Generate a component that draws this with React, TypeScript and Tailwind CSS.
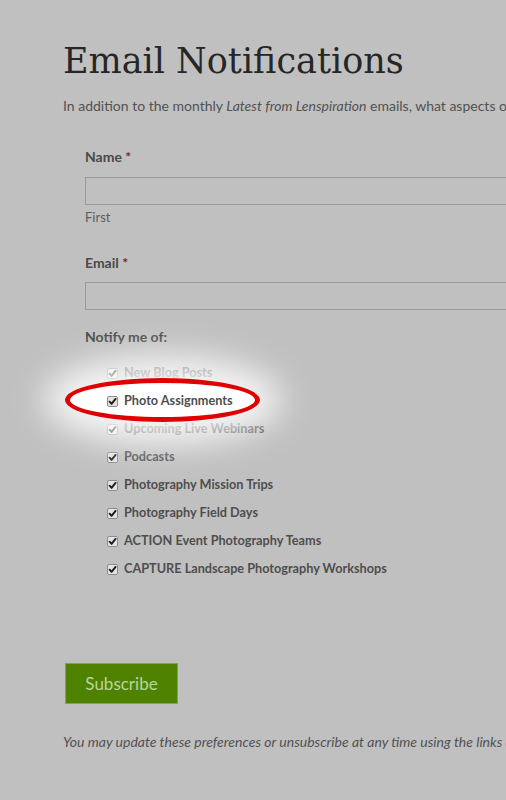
const options = [
  'New Blog Posts',
  'Photo Assignments',
  'Upcoming Live Webinars',
  'Podcasts',
  'Photography Mission Trips',
  'Photography Field Days',
  'ACTION Event Photography Teams',
  'CAPTURE Landscape Photography Workshops',
];

function Tick() {
  return (
    <span className="w-[11px] h-[11px] shrink-0 rounded-[2px] border border-[#8c8c8c] bg-[#e4e4e4] flex items-center justify-center">
      <svg width="9" height="9" viewBox="0 0 10 10">
        <path d="M1.8 5.2 L4 7.6 L8.4 2.2" stroke="#1e1e1e" strokeWidth="2.2" fill="none" strokeLinecap="round" strokeLinejoin="round" />
      </svg>
    </span>
  );
}

export default function App() {
  return (
    <div className="relative w-[506px] h-[800px] overflow-hidden bg-[#c0c0c0] pl-[63px] pt-[41px] font-['Lato','Liberation_Sans',sans-serif]">
      <h1 className="text-[35px] leading-[40px] text-[#262626] font-['DejaVu_Serif',serif] whitespace-nowrap">
        Email Notifications
      </h1>
      <p className="mt-[15px] text-[14px] leading-[20px] text-[#525252] whitespace-nowrap">
        In addition to the monthly <em>Latest from Lenspiration</em> emails, what aspects of Lenspiration would you like to hear about?
      </p>

      <div className="pl-[22px] pt-[31px]">
        <div className="text-[14px] leading-[20px] font-bold text-[#4a4a4a]">
          Name <span className="text-[#7a2a2a]">*</span>
        </div>
        <div className="mt-[10px] w-[440px] h-[28px] border border-[#9a9a9a]" />
        <div className="mt-[4px] text-[13px] leading-[16px] text-[#5e5e5e]">First</div>

        <div className="mt-[28px] text-[14px] leading-[20px] font-bold text-[#4a4a4a]">
          Email <span className="text-[#7a2a2a]">*</span>
        </div>
        <div className="mt-[9px] w-[440px] h-[28px] border border-[#9a9a9a]" />

        <div className="mt-[17px] text-[14px] leading-[20px] font-bold text-[#4a4a4a]">Notify me of:</div>

        <div className="mt-[12px] pl-[22px]">
          {options.map((o) => (
            <div
              key={o}
              className={`h-[28px] flex items-center gap-[6px] text-[12.7px] font-bold text-[#4e4e4e] whitespace-nowrap ${
                o === 'Photo Assignments' ? 'relative z-20' : ''
              }`}
            >
              <Tick />
              <span>{o}</span>
            </div>
          ))}
        </div>
      </div>

      <button className="mt-[80px] ml-[2px] w-[113px] h-[41px] bg-[#4f8200] border border-[#7fa64a] text-[17px] text-[#b9d69a]">
        Subscribe
      </button>

      <p className="mt-[28px] text-[14px] leading-[20px] italic text-[#525252] whitespace-nowrap">
        You may update these preferences or unsubscribe at any time using the links at the bottom of each email.
      </p>

      {/* highlight */}
      <div className="absolute left-[65px] top-[378px] w-[195px] h-[44px] rounded-[50%] bg-white border-[5px] border-[#e00000] z-10 shadow-[0_0_34px_22px_rgba(255,255,255,0.85)]" />
    </div>
  );
}
